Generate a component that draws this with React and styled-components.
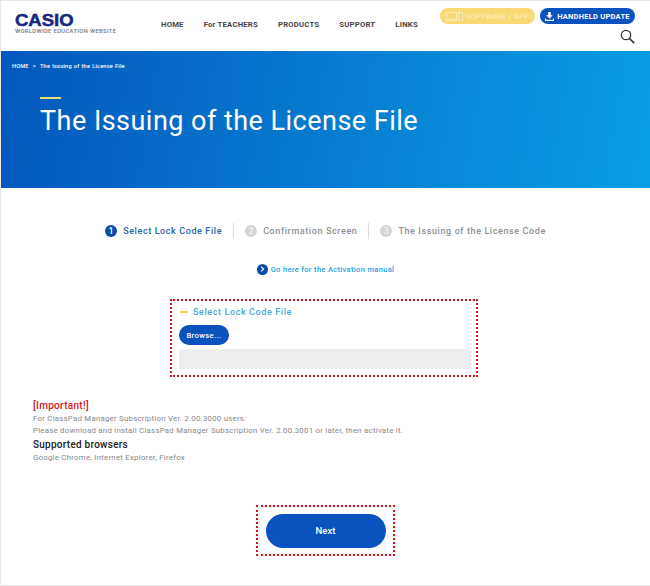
import React from "react";
import styled, { createGlobalStyle } from "styled-components";

const GlobalStyle = createGlobalStyle`
  html, body {
    margin: 0;
    padding: 0;
    background: #fff;
    font-family: Roboto, "Liberation Sans", sans-serif;
  }
  * { box-sizing: border-box; }
`;

const Page = styled.div`
  width: 650px;
  height: 586px;
  overflow: hidden;
  border: 1px solid #e8e8e8;
  border-right: 0;
  background: #fff;
`;

const Header = styled.header`
  height: 50px;
  display: flex;
  padding-left: 14px;
`;

const Logo = styled.div`
  width: 146px;
  padding-top: 13px;
`;

const LogoName = styled.div`
  font-family: "Liberation Sans", sans-serif;
  font-weight: 700;
  font-size: 16.5px;
  line-height: 13px;
  color: #16287f;
  -webkit-text-stroke: 0.5px #16287f;
  transform: scaleX(1.12);
  transform-origin: left center;
`;

const LogoSub = styled.div`
  margin-top: 1px;
  font-size: 5.8px;
  font-weight: 500;
  line-height: 7px;
  letter-spacing: 0.36px;
  color: #77797f;
  white-space: nowrap;
`;

const Nav = styled.nav`
  display: flex;
  gap: 20px;
  padding-top: 18px;
`;

const NavItem = styled.span`
  font-size: 7.7px;
  font-weight: 700;
  line-height: 12px;
  letter-spacing: 0.22px;
  color: #444;
  white-space: nowrap;
`;

const HeaderRight = styled.div`
  margin-left: auto;
  width: 210px;
  padding: 7px 15px 0 0;
  display: flex;
  flex-direction: column;
  align-items: flex-end;
`;

const PillRow = styled.div`
  display: flex;
  gap: 5px;
`;

const Pill = styled.div`
  height: 16px;
  border-radius: 8px;
  display: flex;
  align-items: center;
  justify-content: center;
  gap: 3px;
  width: ${(p) => p.$w}px;
  background: ${(p) => p.$bg};
  color: ${(p) => p.$fg};
  font-size: 7.5px;
  font-weight: 700;
  letter-spacing: 0.25px;
  white-space: nowrap;
`;

const SearchIcon = styled.svg`
  margin-top: 5px;
  display: block;
`;

const Hero = styled.section`
  height: 137px;
  padding: 11px 11px 0;
  color: #fff;
  background: linear-gradient(100deg, #0457bc 0%, #0a9fe4 100%);
`;

const Crumbs = styled.div`
  font-size: 5.6px;
  font-weight: 500;
  line-height: 8px;
  letter-spacing: 0.2px;
  word-spacing: 0.5px;
`;

const HeroInner = styled.div`
  padding: 27px 0 0 28px;
`;

const Accent = styled.div`
  width: 21px;
  height: 1.5px;
  background: #e6de70;
`;

const Title = styled.h1`
  margin: 0;
  padding-top: 4px;
  font-size: 27px;
  line-height: 36px;
  font-weight: 400;
  letter-spacing: 0.47px;
  white-space: nowrap;
`;

const Steps = styled.div`
  display: flex;
  justify-content: center;
  align-items: center;
  padding: 34px 0 0 0;
  height: 52px;
`;

const Step = styled.div`
  display: flex;
  align-items: center;
  gap: 6px;
  height: 16px;
  padding: 0 11px;
  border-left: ${(p) => (p.$first ? "0" : "1px solid #dcdcdc")};
  font-size: 9px;
  font-weight: 500;
  letter-spacing: 0.6px;
  white-space: nowrap;
  color: ${(p) => (p.$active ? "#2b62ad" : "#8f8f8f")};
`;

const StepNum = styled.span`
  width: 12px;
  height: 12px;
  border-radius: 50%;
  display: flex;
  align-items: center;
  justify-content: center;
  font-size: 9px;
  letter-spacing: 0;
  color: ${(p) => (p.$active ? "#fff" : "#f2f2f2")};
  background: ${(p) => (p.$active ? "#0a4cae" : "#d4d4d4")};
`;

const ManualRow = styled.div`
  display: flex;
  justify-content: center;
  align-items: center;
  gap: 3px;
  margin-top: 22px;
  height: 14px;
  font-size: 7.5px;
  font-weight: 500;
  letter-spacing: 0.34px;
  color: #28a0e6;
`;

const ManualIcon = styled.span`
  width: 11px;
  height: 11px;
  border-radius: 50%;
  background: #0a4cae;
  display: flex;
  align-items: center;
  justify-content: center;
`;

const Dotted = styled.div`
  border: 2px dotted ${(p) => p.$color};
`;

const FileBox = styled(Dotted)`
  width: 308px;
  height: 78px;
  margin: 23px 0 0 169px;
  padding: 5px 5px 0 7px;
`;

const BoxTitle = styled.div`
  display: flex;
  align-items: center;
  gap: 5px;
  height: 12px;
  padding-left: 1px;
  font-size: 9px;
  font-weight: 500;
  letter-spacing: 0.6px;
  color: #44a8e6;
`;

const BoxDash = styled.span`
  width: 8px;
  height: 1.5px;
  background: #eed33d;
`;

const Browse = styled.button`
  display: block;
  margin: 7px 0 0;
  padding: 0;
  width: 50px;
  height: 20px;
  border: 0;
  border-radius: 10px;
  background: #0a52bd;
  color: #fff;
  font-family: inherit;
  font-size: 7.6px;
  font-weight: 500;
  letter-spacing: 0.4px;
`;

const FileName = styled.div`
  height: 20px;
  margin-top: 4px;
  border-radius: 2px;
  background: #eeeeee;
`;

const Notes = styled.div`
  padding: 22px 0 0 32px;
`;

const Important = styled.div`
  font-size: 10px;
  font-weight: 500;
  line-height: 14px;
  letter-spacing: 0.3px;
  color: #d2161e;
`;

const Note = styled.p`
  margin: 0;
  font-size: 7.8px;
  line-height: 12px;
  letter-spacing: 0.26px;
  color: #888;
  white-space: nowrap;
`;

const SubHead = styled.div`
  font-size: 10px;
  font-weight: 500;
  line-height: 15px;
  letter-spacing: 0.25px;
  color: #222;
`;

const NextBox = styled(Dotted)`
  width: 139px;
  height: 51px;
  margin: 41px 0 0 255px;
  display: flex;
  align-items: center;
  justify-content: center;
`;

const NextButton = styled.button`
  width: 120px;
  height: 34px;
  padding: 0;
  border: 0;
  border-radius: 17px;
  background: #0a52bd;
  color: #fff;
  font-family: inherit;
  font-size: 9.5px;
  font-weight: 500;
`;

const navItems = ["HOME", "For TEACHERS", "PRODUCTS", "SUPPORT", "LINKS"];

const steps = [
  { n: 1, label: "Select Lock Code File", active: true },
  { n: 2, label: "Confirmation Screen" },
  { n: 3, label: "The Issuing of the License Code" },
];

export default function App() {
  return (
    <Page>
      <GlobalStyle />
      <Header>
        <Logo>
          <LogoName>CASIO</LogoName>
          <LogoSub>WORLDWIDE EDUCATION WEBSITE</LogoSub>
        </Logo>
        <Nav>
          {navItems.map((item) => (
            <NavItem key={item}>{item}</NavItem>
          ))}
        </Nav>
        <HeaderRight>
          <PillRow>
            <Pill $w={95} $bg="#fbd976" $fg="#fdeab0">
              <svg width="17" height="9" viewBox="0 0 17 9" fill="none" stroke="#fdeab0" strokeWidth="1">
                <rect x="0.5" y="0.5" width="10" height="6.5" />
                <path d="M0 8.5h11" />
                <rect x="12.5" y="0.5" width="4" height="8" />
              </svg>
              SOFTWARE / APP
            </Pill>
            <Pill $w={95} $bg="#0a52bd" $fg="#fff">
              <svg width="9" height="9" viewBox="0 0 9 9" fill="#fff">
                <path d="M3.2 0h2.6v3.2h2L4.5 6.4 1.2 3.2h2z" />
                <path d="M0 6.5h1v1.3h7V6.5h1V9H0z" />
              </svg>
              HANDHELD UPDATE
            </Pill>
          </PillRow>
          <SearchIcon width="15" height="15" viewBox="0 0 15 15" fill="none" stroke="#333">
            <circle cx="6" cy="6" r="4.7" strokeWidth="1.2" />
            <path d="M9.5 9.5l4.6 4.6" strokeWidth="1.7" />
          </SearchIcon>
        </HeaderRight>
      </Header>
      <Hero>
        <Crumbs>HOME &nbsp;&gt;&nbsp; The Issuing of the License File</Crumbs>
        <HeroInner>
          <Accent />
          <Title>The Issuing of the License File</Title>
        </HeroInner>
      </Hero>
      <Steps>
        {steps.map((s, i) => (
          <Step key={s.n} $first={i === 0} $active={s.active}>
            <StepNum $active={s.active}>{s.n}</StepNum>
            {s.label}
          </Step>
        ))}
      </Steps>
      <ManualRow>
        <ManualIcon>
          <svg width="5" height="6" viewBox="0 0 5 6" fill="none" stroke="#fff" strokeWidth="1.1">
            <path d="M1.2 0.7L3.6 3 1.2 5.3" />
          </svg>
        </ManualIcon>
        Go here for the Activation manual
      </ManualRow>
      <FileBox $color="#c4121f">
        <BoxTitle>
          <BoxDash />
          Select Lock Code File
        </BoxTitle>
        <Browse>Browse...</Browse>
        <FileName />
      </FileBox>
      <Notes>
        <Important>[Important!]</Important>
        <Note>For ClassPad Manager Subscription Ver. 2.00.3000 users:</Note>
        <Note>Please download and install ClassPad Manager Subscription Ver. 2.00.3001 or later, then activate it.</Note>
        <SubHead>Supported browsers</SubHead>
        <Note>Google Chrome, Internet Explorer, Firefox</Note>
      </Notes>
      <NextBox $color="#dc0d1e">
        <NextButton>Next</NextButton>
      </NextBox>
    </Page>
  );
}
